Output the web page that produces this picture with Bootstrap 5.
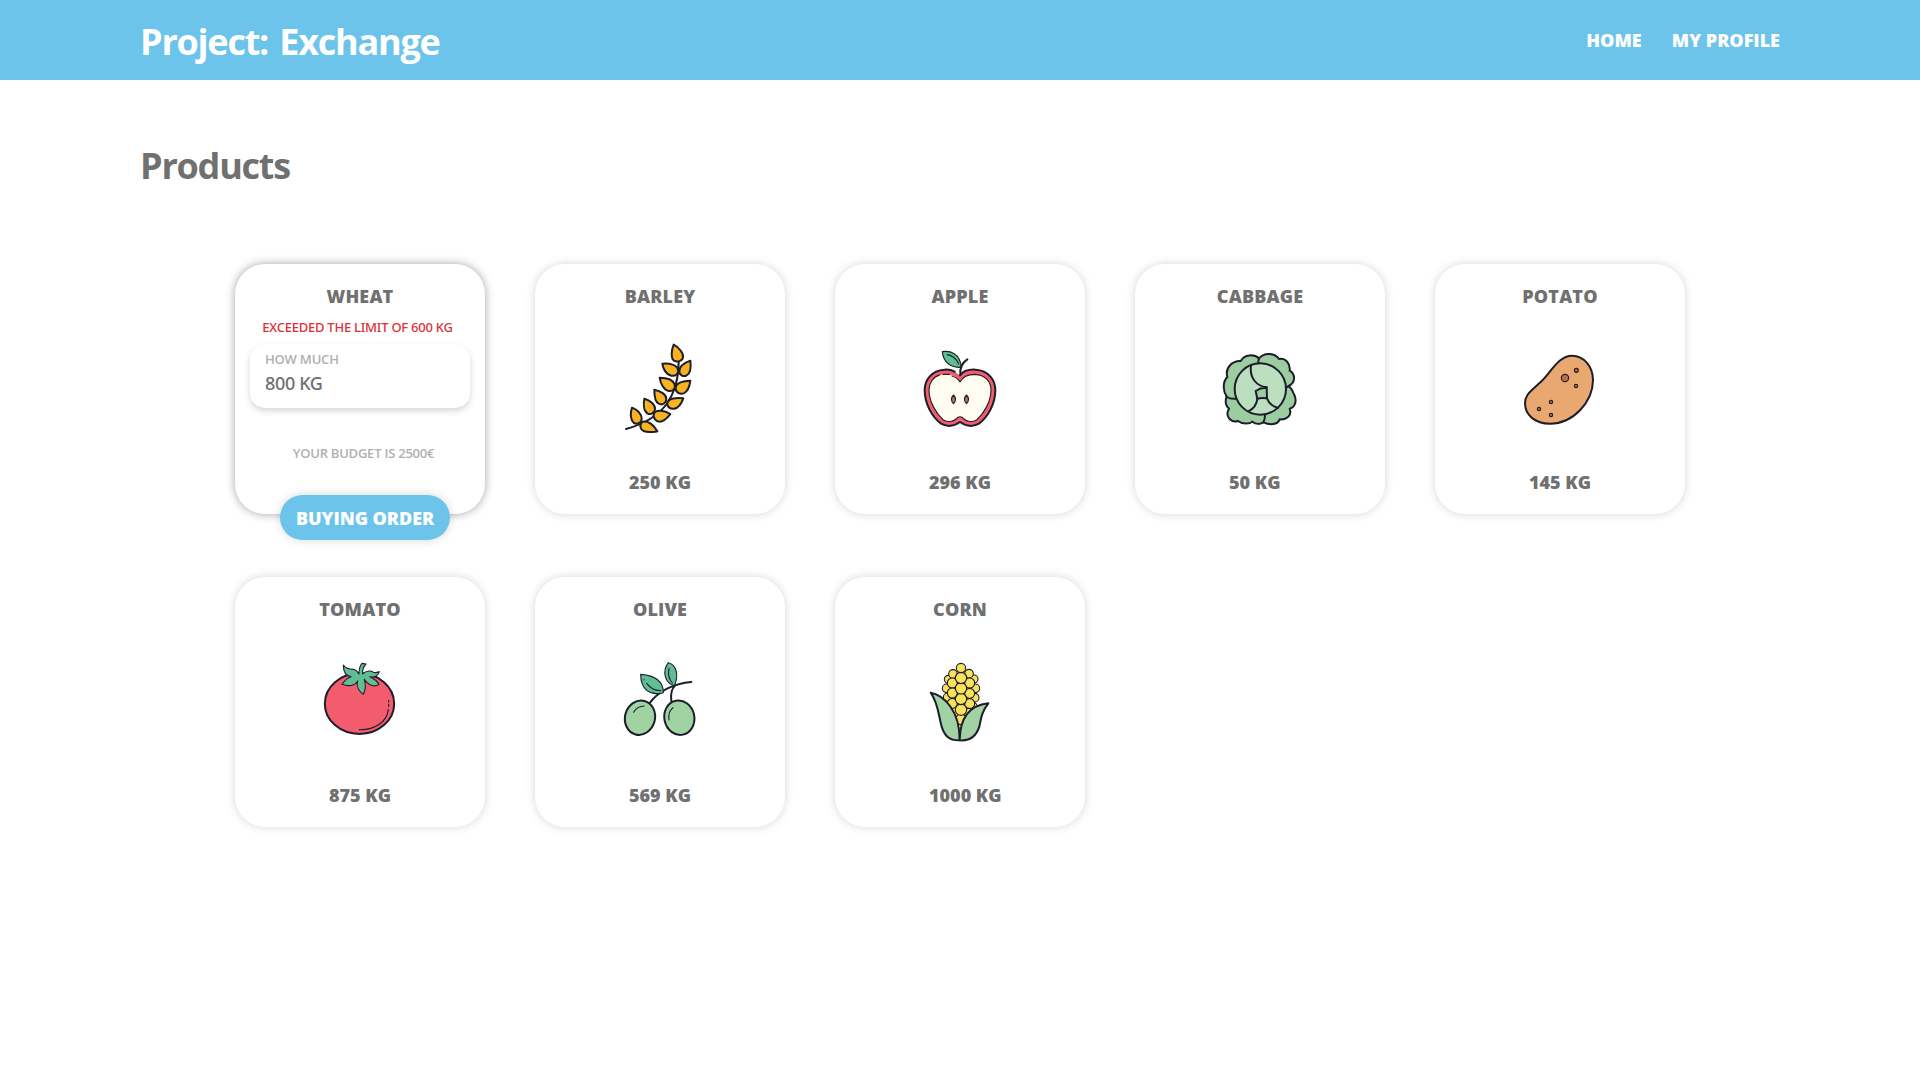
<!DOCTYPE html>
<html lang="en">
<head>
<meta charset="utf-8">
<meta name="viewport" content="width=device-width, initial-scale=1">
<title>Project: Exchange</title>
<link href="https://cdn.jsdelivr.net/npm/bootstrap@5.3.0/dist/css/bootstrap.min.css" rel="stylesheet">
<style>
  :root { --sky: #6cc4eb; --ink: #707070; --line: #1d1d2b; }
  body { font-family: "Open Sans", "Noto Sans", sans-serif; color: var(--ink); background: #fff; }
  .topbar { height: 80px; background: var(--sky); padding: 0 140px; }
  .heading { font-size: 36px; font-weight: 700; line-height: 50px; letter-spacing: -1.22px; word-spacing: 3px; margin: 0; }
  .topbar .heading { padding-top: 4px; color: #fff; }
  .heavy { font-size: 18px; font-weight: 800; line-height: 24px; }
  .topbar .nav { gap: 30px; }
  .topbar .nav-link { padding: 0; color: #fff; }
  .page-title { padding: 61px 140px 73px; }
  .product-grid { display: grid; grid-template-columns: repeat(5, 250px); gap: 63px 50px; padding-left: 235px; }
  .product { width: 250px; height: 250px; border: 0; border-radius: 30px; background: #fff; box-shadow: 0 0 10px rgba(0,0,0,.16); }
  .product.active { box-shadow: 0 0 10px rgba(0,0,0,.36); }
  .product-name { padding-top: 20px; margin: 0; text-align: center; letter-spacing: .15px; }
  .product-art { width: 100px; height: 110px; margin: 22px auto 30px; display: block; overflow: visible; }
  .product-qty { padding-left: 94px; white-space: nowrap; }
  .note { font-size: 13px; font-weight: 600; line-height: 18px; letter-spacing: -.2px; color: #b0b0b0; white-space: nowrap; }
  .limit { font-family: "Noto Sans", sans-serif; font-weight: 500; letter-spacing: -.24px; margin: 10px 5px 8px 0; text-align: center; color: #dc3038; }
  .amount { height: 64px; margin: 0 15px; padding: 6px 15px; border-radius: 15px; box-shadow: 0 3px 6px rgba(0,0,0,.16); }
  .amount-value { font-family: "Noto Sans", sans-serif; font-size: 18px; font-weight: 500; line-height: 24px; letter-spacing: -.35px; padding-top: 3px; }
  .budget { margin: 36px 0 0 7px; text-align: center; letter-spacing: -.23px; }
  .order { position: absolute; left: 45px; top: 231px; width: 170px; height: 45px; padding: 1px 0 0; border: 0; border-radius: 23px; background: var(--sky); color: #fff; box-shadow: 0 0 10px rgba(0,0,0,.16); letter-spacing: -.05px; white-space: nowrap; }
  .order:hover { background: var(--sky); color: #fff; }
  .product-art * { stroke: var(--line); stroke-width: 6; stroke-linejoin: round; stroke-linecap: round; }
  .product-art .bare { fill: none; }
  .product-art .thin, .product-art .thin * { stroke-width: 3.3; }
  .product-art .flat { stroke: none; }
</style>
</head>
<body class="min-vh-100">
<header class="topbar d-flex justify-content-between align-items-center">
  <h1 class="heading">Project: Exchange</h1>
  <nav class="nav">
    <a class="nav-link heavy" href="#">HOME</a>
    <a class="nav-link heavy" href="#">MY PROFILE</a>
  </nav>
</header>
<main>
  <div class="page-title"><h2 class="heading">Products</h2></div>
  <section class="product-grid">

    <article class="card product active">
      <h3 class="product-name heavy">WHEAT</h3>
      <div class="note limit">EXCEEDED THE LIMIT OF 600 KG</div>
      <div class="amount">
        <div class="note">HOW MUCH</div>
        <div class="amount-value">800 KG</div>
      </div>
      <div class="note budget">YOUR BUDGET IS 2500€</div>
      <button class="btn order heavy" type="button">BUYING ORDER</button>
    </article>

    <article class="card product">
      <h3 class="product-name heavy">BARLEY</h3>
      <svg class="product-art" viewBox="0 0 300 330">
        <path class="bare" d="M48 297Q130 275 170 222Q206 170 206 95"/>
        <g fill="#f9b320">
          <path d="M191 44C184 60 182 85 192 92C202 98 217 93 219 82C221 70 207 52 191 44Z"/>
          <path d="M157 101C159 116 168 134 184 137C197 139 207 131 204 119C200 105 180 99 157 101Z"/>
          <path d="M241 92C227 97 209 108 208 123C207 135 220 142 230 136C242 130 243 108 241 92Z"/>
          <path d="M149 143C151 160 161 180 176 183C190 185 197 175 194 163C189 149 170 143 149 143Z"/>
          <path d="M241 152C220 152 198 158 197 174C196 187 210 194 221 190C233 185 239 168 241 152Z"/>
          <path d="M133 179C133 195 134 215 146 221C158 227 169 219 169 206C169 194 152 183 133 179Z"/>
          <path d="M220 205C200 202 176 204 172 219C170 231 182 238 193 236C207 233 215 219 220 205Z"/>
          <path d="M103 206C100 222 101 243 112 250C122 256 134 249 135 237C136 224 120 211 103 206Z"/>
          <path d="M181 252C165 242 138 237 132 251C127 262 138 275 149 275C163 275 173 262 181 252Z"/>
          <path d="M66 233C60 250 61 270 72 279C82 284 95 278 95 266C95 252 82 239 66 233Z"/>
          <path d="M142 304C133 287 115 271 100 275C87 280 89 297 101 303C114 309 130 306 142 304Z"/>
        </g>
      </svg>
      <div class="product-qty heavy">250 KG</div>
    </article>

    <article class="card product">
      <h3 class="product-name heavy">APPLE</h3>
      <svg class="product-art" viewBox="0 -15 300 330">
        <path class="flat" fill="#f25c6c" d="M150 123C160 107 180 103 197 104C235 106 256 135 256 165C256 205 235 245 208 265C188 277 168 274 150 261C132 274 112 277 92 265C65 245 44 205 44 165C44 135 65 106 103 104C120 103 138 108 150 123Z"/>
        <path class="bare" d="M150 121C160 107 180 103 197 104C235 106 256 135 256 165C256 205 235 245 208 265C188 277 168 274 150 261C132 274 112 277 92 265C65 245 44 205 44 165C44 135 65 106 103 104C115 103 125 105 134 110"/>
        <path class="flat" fill="#fffdf0" d="M150 141C158 125 175 118 195 118C225 119 243 140 243 165C243 200 222 235 200 255C185 263 170 260 162 252C155 243 145 243 138 252C130 260 115 263 100 255C78 235 57 200 57 165C57 140 75 119 105 118C125 118 142 125 150 141Z"/>
        <path class="bare thin" d="M126 123C138 127 145 132 150 141C158 125 175 118 195 118C225 119 243 140 243 165C243 200 222 235 200 255C185 263 170 260 162 252C155 243 145 243 138 252C130 260 115 263 100 255C78 235 57 200 57 165C57 144 70 125 89 120M99 118H118"/>
        <g class="thin"><path fill="#b9723f" d="M130.500 180Q143 193 130.500 206Q118 193 130.500 180ZM169.500 180Q182 193 169.500 206Q157 193 169.500 180Z"/>
        <path fill="#5fbe94" d="M97 50C120 46 150 55 154 97C125 98 100 85 97 50Z"/><path class="bare" d="M112 59C127 61 139 72 146 87"/></g>
        <path class="bare" d="M151 119C149 100 156 84 172 73"/>
      </svg>
      <div class="product-qty heavy">296 KG</div>
    </article>

    <article class="card product">
      <h3 class="product-name heavy">CABBAGE</h3>
      <svg class="product-art" viewBox="0 -30 300 330">
        <path fill="#9bcda1" d="M147 55C132 42 104 42 92 63C68 62 44 82 52 111C38 125 38 152 50 170C44 185 48 200 57 206C44 228 62 250 84 243C98 254 120 252 127 245C138 254 153 253 160 247C180 256 203 255 209 238C232 240 246 225 239 206C258 200 260 180 253 165C248 148 242 143 236 138C258 128 256 102 239 92C242 70 225 52 207 57C195 40 165 35 147 55Z"/>
        <path class="bare" d="M147 55Q144 62 145 75M50 170Q60 178 79 176M228 143L238 138M160 247Q166 235 165 221"/>
        <circle cx="151" cy="147" r="77" fill="#bce0bf"/>
        <path fill="#9bcda1" d="M137 153C148 149 150 142 160 145L170 142L171 175C160 173 153 173 142 176Z"/>
        <path class="bare" d="M123 77C118 115 140 138 170 142M142 176C140 195 130 207 115 214M171 175C176 190 190 200 204 204"/>
      </svg>
      <div class="product-qty heavy">50 KG</div>
    </article>

    <article class="card product">
      <h3 class="product-name heavy">POTATO</h3>
      <svg class="product-art" viewBox="0 -30 300 330">
        <path fill="#e8a870" d="M186 47C222 47 249 80 249 120C249 185 190 251 120 251C75 251 45 225 45 190C45 165 60 155 85 132C118 108 142 47 186 47Z"/>
        <g class="thin" fill="#b9723f"><circle cx="165" cy="114" r="11"/><circle cx="199" cy="91" r="6"/><circle cx="198" cy="138" r="5"/><circle cx="123" cy="186" r="5"/><circle cx="87" cy="207" r="5"/><circle cx="123" cy="225" r="5"/></g>
      </svg>
      <div class="product-qty heavy">145 KG</div>
    </article>

    <article class="card product">
      <h3 class="product-name heavy">TOMATO</h3>
      <svg class="product-art" viewBox="0 -21 300 330">
        <ellipse cx="148.500" cy="161" rx="104" ry="91" fill="#f25c6c"/>
        <g class="thin"><path class="bare" d="M148 239C195 240 232 215 235 178M236 151v5M236 163v6"/>
        <path fill="#5fbe94" d="M147 72C147 58 150 46 156 40L168 42C160 50 157 60 158 72C170 60 185 62 190 67C198 70 205 66 208 65C205 75 195 84 180 80C190 86 200 90 207 103C195 112 175 108 163 88C168 105 167 120 160 133C148 125 138 110 143 93C135 108 115 110 96 103C102 95 108 85 123 80C105 78 100 65 100 45C108 58 120 58 130 58C138 60 144 66 147 72Z"/></g>
      </svg>
      <div class="product-qty heavy">875 KG</div>
    </article>

    <article class="card product">
      <h3 class="product-name heavy">OLIVE</h3>
      <svg class="product-art" viewBox="0 -21 300 330">
        <path class="bare" d="M120 158C145 125 190 100 244 96M184 153C181 130 186 115 196 106"/>
        <ellipse cx="90" cy="203" rx="45" ry="52" fill="#9fd3a1" transform="rotate(15 90 203)"/>
        <ellipse cx="208" cy="203" rx="45" ry="52" fill="#9fd3a1" transform="rotate(-12 208 203)"/>
        <g class="thin"><path fill="#5fbe94" d="M92 73C120 75 160 85 160 128C120 138 92 120 92 73Z"/><path fill="#5fbe94" d="M175 38C200 45 207 75 193 107C165 100 155 65 175 38Z"/>
        <path class="bare" d="M110 100C123 117 134 121 152 122M102 89v1M177 55C173 75 179 90 187 99M71 187C77 175 88 168 103 168M177 210C175 195 178 180 189 173"/></g>
      </svg>
      <div class="product-qty heavy">569 KG</div>
    </article>

    <article class="card product">
      <h3 class="product-name heavy">CORN</h3>
      <svg class="product-art" viewBox="0 -21 300 330">
        <g class="thin" fill="#fae15c">
          <path d="M120 100H186L196 168L150 250L112 150Z"/>
          <circle cx="115" cy="88" r="12"/><circle cx="110" cy="115" r="13"/><circle cx="113" cy="142" r="13"/><circle cx="192" cy="87" r="12"/><circle cx="196" cy="115" r="13"/><circle cx="194" cy="143" r="13"/><circle cx="190" cy="170" r="12"/>
          <circle cx="129" cy="72" r="13"/><circle cx="127" cy="99" r="15"/><circle cx="127" cy="129" r="15"/><circle cx="127" cy="160" r="15"/><circle cx="177" cy="71" r="13"/><circle cx="179" cy="99" r="15"/><circle cx="179" cy="130" r="15"/><circle cx="179" cy="161" r="15"/><circle cx="176" cy="188" r="13"/>
          <circle cx="153" cy="208" r="16"/><circle cx="153" cy="179" r="17"/><circle cx="153" cy="147" r="17"/><circle cx="153" cy="115" r="17"/><circle cx="153" cy="84" r="17"/><circle cx="153" cy="54" r="14"/>
        </g>
        <g fill="#a0d2a3"><path d="M62 128C100 135 150 180 149 271C115 272 103 255 95 230C85 195 85 160 62 128Z"/><path d="M235 160C190 165 150 190 149 271C185 274 200 255 208 230C213 205 215 185 235 160Z"/></g>
      </svg>
      <div class="product-qty heavy">1000 KG</div>
    </article>

  </section>
</main>
<script src="https://cdn.jsdelivr.net/npm/bootstrap@5.3.0/dist/js/bootstrap.bundle.min.js"></script>
</body>
</html>
